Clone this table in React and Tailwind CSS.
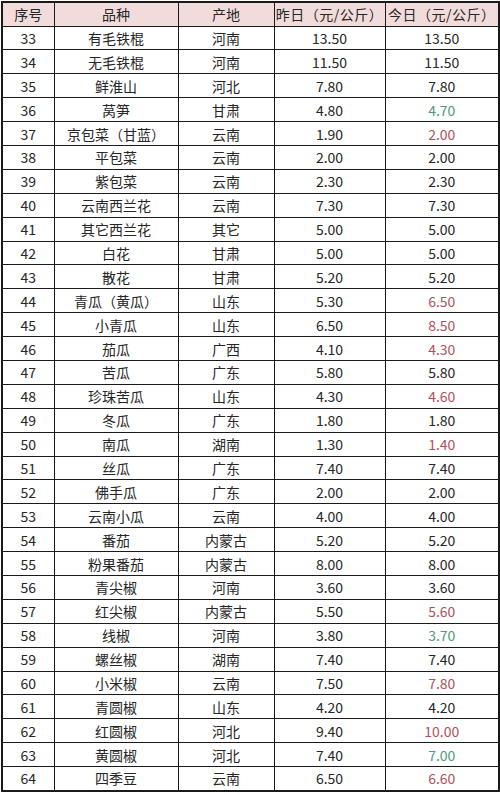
const rows = [
  [33, '有毛铁棍', '河南', '13.50', '13.50'],
  [34, '无毛铁棍', '河南', '11.50', '11.50'],
  [35, '鲜淮山', '河北', '7.80', '7.80'],
  [36, '莴笋', '甘肃', '4.80', '4.70', 'g'],
  [37, '京包菜（甘蓝）', '云南', '1.90', '2.00', 'r'],
  [38, '平包菜', '云南', '2.00', '2.00'],
  [39, '紫包菜', '云南', '2.30', '2.30'],
  [40, '云南西兰花', '云南', '7.30', '7.30'],
  [41, '其它西兰花', '其它', '5.00', '5.00'],
  [42, '白花', '甘肃', '5.00', '5.00'],
  [43, '散花', '甘肃', '5.20', '5.20'],
  [44, '青瓜（黄瓜）', '山东', '5.30', '6.50', 'r'],
  [45, '小青瓜', '山东', '6.50', '8.50', 'r'],
  [46, '茄瓜', '广西', '4.10', '4.30', 'r'],
  [47, '苦瓜', '广东', '5.80', '5.80'],
  [48, '珍珠苦瓜', '山东', '4.30', '4.60', 'r'],
  [49, '冬瓜', '广东', '1.80', '1.80'],
  [50, '南瓜', '湖南', '1.30', '1.40', 'r'],
  [51, '丝瓜', '广东', '7.40', '7.40'],
  [52, '佛手瓜', '广东', '2.00', '2.00'],
  [53, '云南小瓜', '云南', '4.00', '4.00'],
  [54, '番茄', '内蒙古', '5.20', '5.20'],
  [55, '粉果番茄', '内蒙古', '8.00', '8.00'],
  [56, '青尖椒', '河南', '3.60', '3.60'],
  [57, '红尖椒', '内蒙古', '5.50', '5.60', 'r'],
  [58, '线椒', '河南', '3.80', '3.70', 'g'],
  [59, '螺丝椒', '湖南', '7.40', '7.40'],
  [60, '小米椒', '云南', '7.50', '7.80', 'r'],
  [61, '青圆椒', '山东', '4.20', '4.20'],
  [62, '红圆椒', '河北', '9.40', '10.00', 'r'],
  [63, '黄圆椒', '河北', '7.40', '7.00', 'g'],
  [64, '四季豆', '云南', '6.50', '6.60', 'r'],
];

const cell = 'border border-[#1a1a1a] text-center align-middle p-0 leading-none';

export default function App() {
  return (
    <div className="bg-white w-[500px] h-[795px] pt-[1px] pl-[1px] font-['Noto_Sans_CJK_SC','Noto_Sans',sans-serif] text-[14px] text-[#262626]">
      <table className="border-collapse border-2 border-[#1a1a1a] table-fixed w-[497px]">
        <colgroup>
          <col className="w-[52px]" />
          <col className="w-[124px]" />
          <col className="w-[96px]" />
          <col className="w-[111px]" />
          <col className="w-[114px]" />
        </colgroup>
        <thead>
          <tr className="h-[24px] bg-[#f2dcdb]">
            <th className={`${cell} font-normal`}>序号</th>
            <th className={`${cell} font-normal`}>品种</th>
            <th className={`${cell} font-normal`}>产地</th>
            <th className={`${cell} font-normal tracking-[0.5px]`}>昨日（元/公斤）</th>
            <th className={`${cell} font-normal tracking-[0.5px]`}>今日（元/公斤）</th>
          </tr>
        </thead>
        <tbody>
          {rows.map(([no, name, place, y, t, c]) => (
            <tr key={no} className="h-[23.9px]">
              <td className={cell}>{no}</td>
              <td className={cell}>{name}</td>
              <td className={cell}>{place}</td>
              <td className={cell}>{y}</td>
              <td
                className={`${cell} ${
                  c === 'r' ? 'text-[#b4505c]' : c === 'g' ? 'text-[#4f9a7a]' : ''
                }`}
              >
                {t}
              </td>
            </tr>
          ))}
        </tbody>
      </table>
    </div>
  );
}
